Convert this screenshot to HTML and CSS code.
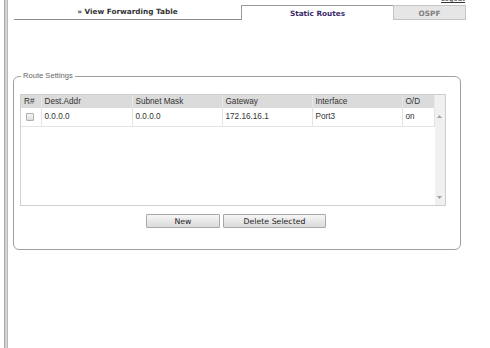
FILE: index.html
```html
<!DOCTYPE html>
<html>
<head>
    <link rel="stylesheet" href="styles.css">
    <title>Static Routes</title>
</head>
<body>
    <div class="page">
        <div class="rail"></div>
        <div class="main">
            <div class="topline"><a href="#">Logout</a></div>
            <div class="tabs">
                <a class="tab tab-view" href="#">&raquo; View Forwarding Table</a>
                <a class="tab tab-active" href="#">Static Routes</a>
                <a class="tab tab-off" href="#">OSPF</a>
            </div>

            <fieldset class="settings">
                <legend>Route Settings</legend>
                <div class="grid">
                    <div class="grid-body">
                        <table class="routes">
                            <colgroup>
                                <col style="width:20px">
                                <col style="width:91px">
                                <col style="width:90px">
                                <col style="width:90px">
                                <col style="width:90px">
                                <col style="width:32px">
                            </colgroup>
                            <thead>
                                <tr>
                                    <th>R#</th>
                                    <th>Dest.Addr</th>
                                    <th>Subnet Mask</th>
                                    <th>Gateway</th>
                                    <th>Interface</th>
                                    <th>O/D</th>
                                </tr>
                            </thead>
                            <tbody>
                                <tr>
                                    <td class="check"><input type="checkbox"></td>
                                    <td>0.0.0.0</td>
                                    <td>0.0.0.0</td>
                                    <td>172.16.16.1</td>
                                    <td>Port3</td>
                                    <td>on</td>
                                </tr>
                            </tbody>
                        </table>
                    </div>
                    <div class="scroll">
                        <svg width="5" height="3" viewBox="0 0 5 3"><polygon points="0,3 2.5,0 5,3" fill="#a0a0a0"/></svg>
                        <svg width="5" height="3" viewBox="0 0 5 3"><polygon points="0,0 5,0 2.5,3" fill="#a0a0a0"/></svg>
                    </div>
                </div>
                <div class="actions">
                    <button class="btn btn-new">New</button>
                    <button class="btn btn-delete">Delete Selected</button>
                </div>
            </fieldset>
        </div>
    </div>
</body>
</html>
```

FILE: styles.css
```css
* {
    box-sizing: border-box;
}

body {
    margin: 0;
    padding: 0;
    background-color: #ffffff;
    font-family: "Liberation Sans", Arial, sans-serif;
}

.page {
    display: flex;
    min-height: 348px;
}

.rail {
    width: 4px;
    margin-left: 4px;
    background-color: #d2d2d2;
    border-left: 1px solid #a8a8a8;
    border-right: 1px solid #bcbcbc;
}

.main {
    flex: 1;
}

/* top strip, the logout link is mostly scrolled off */
.topline {
    display: flex;
    justify-content: flex-end;
    align-items: flex-start;
    height: 5px;
    overflow: hidden;
    padding-right: 25px;
}

.topline a {
    display: block;
    margin-top: -5px;
    font-family: "DejaVu Sans", Verdana, sans-serif;
    font-size: 7px;
    line-height: 8px;
    color: #333;
}

.tabs {
    display: flex;
    height: 15px;
    margin-left: 6px;
}

.tab {
    display: block;
    text-decoration: none;
    text-align: center;
    font-family: "DejaVu Sans", Verdana, sans-serif;
    font-weight: bold;
    font-size: 7.3px;
    line-height: 14px;
}

.tab-view {
    width: 227px;
    color: #333;
    border-bottom: 1px solid #8c8c8c;
}

.tab-active {
    width: 152px;
    color: #3b2b6b;
    border-top: 1px solid #9a9a9a;
    border-left: 1px solid #9a9a9a;
    padding-top: 1px;
}

.tab-off {
    width: 73px;
    color: #808080;
    background-color: #e6e6e6;
    border: 1px solid #c4c4c4;
    line-height: 13px;
    padding-top: 1px;
}

/* route settings box */
.settings {
    width: 448px;
    margin: 51px 0 0 5px;
    padding: 13px 14px 21px 6px;
    border: 1px solid #a0a0a0;
    border-radius: 6px;
}

.settings legend {
    margin-left: 1px;
    padding: 0 2px;
    font-size: 7.6px;
    line-height: 10px;
    color: #666;
}

.grid {
    display: flex;
    width: 426px;
    height: 112px;
    border: 1px solid #cfcfcf;
}

.grid-body {
    flex: 1;
}

.routes {
    border-collapse: collapse;
    table-layout: fixed;
    width: 100%;
    font-size: 8.2px;
    color: #333;
}

.routes th {
    height: 13px;
    padding: 0 0 0 3px;
    background-color: #dbdbdb;
    border-right: 1px solid #e8e8e8;
    font-weight: normal;
    text-align: left;
    white-space: nowrap;
}

.routes td {
    height: 18px;
    padding: 0 0 0 3px;
    border-right: 1px solid #e4e4e4;
    border-bottom: 1px solid #e4e4e4;
    white-space: nowrap;
}

.routes td.check {
    padding-left: 5px;
}

.routes input[type="checkbox"] {
    appearance: none;
    -webkit-appearance: none;
    display: block;
    width: 8px;
    height: 8px;
    margin: 0;
    border: 1px solid #b0b0b0;
    border-radius: 1px;
    background: linear-gradient(#f6f6f6, #dcdcdc);
}

.scroll {
    width: 12px;
    background-color: #f0f0f0;
    display: flex;
    flex-direction: column;
    justify-content: space-between;
    align-items: center;
    padding: 20px 0 6px 0;
}

.scroll svg {
    display: block;
}

.actions {
    display: flex;
    gap: 3px;
    margin: 8px 0 0 126px;
}

.btn {
    height: 14px;
    padding: 0;
    font-family: "DejaVu Sans", Verdana, sans-serif;
    font-size: 7.8px;
    color: #222;
    background: linear-gradient(#f6f6f6, #dadada);
    border: 1px solid #a8a8a8;
    border-radius: 1px;
}

.btn-new {
    width: 74px;
}

.btn-delete {
    width: 103px;
}
```
